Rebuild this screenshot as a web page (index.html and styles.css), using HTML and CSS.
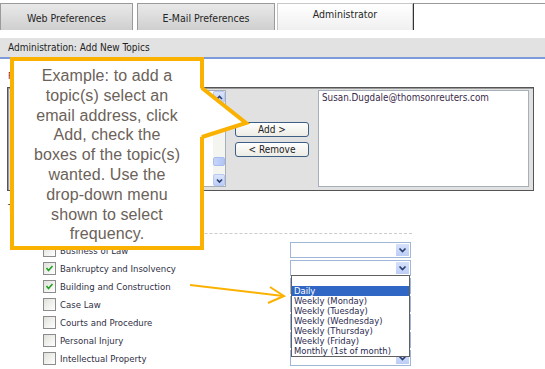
FILE: index.html
```html
<html>
<head>
<title>Administration: Add New Topics</title>
<link rel="stylesheet" href="styles.css">
<meta http-equiv="Content-Type" content="text/html; charset=UTF-8">
</head>
<body>
<div class="page">

 <div class="tabs">
  <div class="tab">Web Preferences</div>
  <div class="tab tab-wide">E-Mail Preferences</div>
  <div class="tab tab-active">Administrator</div>
  <div class="tab-rest"></div>
 </div>

 <div class="section-bar">Administration: Add New Topics</div>

 <div class="panel">
  <div class="field-label red">From:</div>
  <div class="user-box">
   <div class="listbox listbox-left">
    <div class="scrollbar">
     <div class="scroll-btn"><svg width="9" height="9" viewBox="0 0 9 9"><polyline points="2,6 4.5,3.5 7,6" fill="none" stroke="#2a3e70" stroke-width="1.6"/></svg></div>
     <div class="scroll-track"><div class="scroll-thumb"></div></div>
     <div class="scroll-btn"><svg width="9" height="9" viewBox="0 0 9 9"><polyline points="2,3.5 4.5,6 7,3.5" fill="none" stroke="#2a3e70" stroke-width="1.6"/></svg></div>
    </div>
   </div>
   <div class="buttons">
    <div class="btn">Add &gt;</div>
    <div class="btn">&lt; Remove</div>
   </div>
   <div class="listbox listbox-right">
    <div class="list-item">Susan.Dugdale@thomsonreuters.com</div>
   </div>
  </div>

  <div class="field-label">Topics:</div>
  <div class="topics">
   <div class="topic-row"><span class="check"></span><span class="topic-name">Business of Law</span><div class="select"><span class="select-arrow"><svg width="9" height="7" viewBox="0 0 9 7"><polyline points="1.5,1.5 4.5,4.5 7.5,1.5" fill="none" stroke="#2a3e70" stroke-width="1.7"/></svg></span></div></div>
   <div class="topic-row"><span class="check checked"><svg width="11" height="11" viewBox="0 0 11 11"><polyline points="2.5,5 4.5,7.5 8.5,3" fill="none" stroke="#22a022" stroke-width="1.6"/></svg></span><span class="topic-name">Bankruptcy and Insolvency</span><div class="select"><span class="select-arrow"><svg width="9" height="7" viewBox="0 0 9 7"><polyline points="1.5,1.5 4.5,4.5 7.5,1.5" fill="none" stroke="#2a3e70" stroke-width="1.7"/></svg></span></div></div>
   <div class="topic-row"><span class="check checked"><svg width="11" height="11" viewBox="0 0 11 11"><polyline points="2.5,5 4.5,7.5 8.5,3" fill="none" stroke="#22a022" stroke-width="1.6"/></svg></span><span class="topic-name">Building and Construction</span><div class="select"><span class="select-arrow"><svg width="9" height="7" viewBox="0 0 9 7"><polyline points="1.5,1.5 4.5,4.5 7.5,1.5" fill="none" stroke="#2a3e70" stroke-width="1.7"/></svg></span></div></div>
   <div class="topic-row"><span class="check"></span><span class="topic-name">Case Law</span><div class="select"><span class="select-arrow"><svg width="9" height="7" viewBox="0 0 9 7"><polyline points="1.5,1.5 4.5,4.5 7.5,1.5" fill="none" stroke="#2a3e70" stroke-width="1.7"/></svg></span></div></div>
   <div class="topic-row"><span class="check"></span><span class="topic-name">Courts and Procedure</span><div class="select"><span class="select-arrow"><svg width="9" height="7" viewBox="0 0 9 7"><polyline points="1.5,1.5 4.5,4.5 7.5,1.5" fill="none" stroke="#2a3e70" stroke-width="1.7"/></svg></span></div></div>
   <div class="topic-row"><span class="check"></span><span class="topic-name">Personal Injury</span><div class="select"><span class="select-arrow"><svg width="9" height="7" viewBox="0 0 9 7"><polyline points="1.5,1.5 4.5,4.5 7.5,1.5" fill="none" stroke="#2a3e70" stroke-width="1.7"/></svg></span></div></div>
   <div class="topic-row"><span class="check"></span><span class="topic-name">Intellectual Property</span><div class="select"><span class="select-arrow"><svg width="9" height="7" viewBox="0 0 9 7"><polyline points="1.5,1.5 4.5,4.5 7.5,1.5" fill="none" stroke="#2a3e70" stroke-width="1.7"/></svg></span></div></div>
  </div>
 </div>

 <!-- open frequency menu -->
 <div class="dropdown">
  <div class="option">&nbsp;</div>
  <div class="option option-selected">Daily</div>
  <div class="option">Weekly (Monday)</div>
  <div class="option">Weekly (Tuesday)</div>
  <div class="option">Weekly (Wednesday)</div>
  <div class="option">Weekly (Thursday)</div>
  <div class="option">Weekly (Friday)</div>
  <div class="option">Monthly (1st of month)</div>
 </div>

 <!-- annotation -->
 <div class="callout">Example: to add a<br>topic(s) select an<br>email address, click<br>Add, check the<br>boxes of the topic(s)<br>wanted. Use the<br>drop-down menu<br>shown to select<br>frequency.</div>
 <svg class="callout-tail" width="52" height="60" viewBox="0 0 52 60">
  <polygon points="0,6 47,41 0,55" fill="#ffffff"/>
  <polyline points="2,6 46,41 2,55" fill="none" stroke="#fbb100" stroke-width="4"/>
 </svg>
 <svg class="pointer-arrow" width="105" height="30" viewBox="0 0 105 30">
  <line x1="5" y1="5" x2="98" y2="16" stroke="#fbb100" stroke-width="2"/>
  <polyline points="85,7 99,16 83,23" fill="none" stroke="#fbb100" stroke-width="2"/>
 </svg>

</div>
</body>
</html>
```
FILE: styles.css
```css
body {
 margin: 0;
 background-color: #FFFFFF;
 font-family: "DejaVu Sans Condensed", "Liberation Sans", sans-serif;
 font-size: 9.5px;
 color: #2e2e3a;
}
.page {
 position: relative;
 width: 545px;
 height: 369px;
 overflow: hidden;
}
.tabs {
 display: flex;
 height: 27px;
 margin-top: 3px;
}
.tab {
 width: 133px;
 box-sizing: border-box;
 border: 1px solid #9a9a9a;
 border-bottom: none;
 background: linear-gradient(#e9e9e9, #cfcfcf);
 text-align: center;
 font-size: 10.5px;
 line-height: 28px;
 color: #262626;
}
.tab-wide {
 width: 138px;
 margin-left: 4px;
}
.tab-active {
 width: 136px;
 margin-left: 2px;
 border-color: #c8c8c8;
 background: linear-gradient(#ffffff, #f0f0f0);
 line-height: 20px;
}
.tab-rest {
 flex: 1;
 border-top: 1px solid #9a9a9a;
 border-left: 1px solid #333333;
}
.section-bar {
 margin-top: 8px;
 height: 19px;
 line-height: 20px;
 padding-left: 8px;
 background-color: #e2e2e2;
 border-bottom: 2px solid #7c9bd8;
 color: #222222;
 font-size: 10px;
}
.panel {
 padding-left: 7px;
}
.field-label {
 height: 16px;
 margin-top: 9px;
 padding-left: 1px;
 line-height: 16px;
}
.red {
 color: #8b2020;
}
.user-box {
 display: flex;
 width: 527px;
 height: 104px;
 box-sizing: border-box;
 margin-top: 3px;
 padding: 2px 3px;
 border: 1px solid #555555;
 box-shadow: inset 1px 1px 0 #9a9a9a;
 background-color: #e1e1e1;
}
.listbox {
 height: 97px;
 box-sizing: border-box;
 border: 1px solid #a6aeb9;
 background-color: #ffffff;
}
.listbox-left {
 width: 215px;
 display: flex;
 justify-content: flex-end;
}
.listbox-right {
 width: 211px;
 margin-left: 9px;
}
.list-item {
 padding: 1px 3px;
 font-size: 9.8px;
 color: #3a2a4a;
}
.scrollbar {
 width: 12px;
 display: flex;
 flex-direction: column;
 background-color: #f4f4f0;
}
.scroll-btn {
 height: 12px;
 box-sizing: border-box;
 border: 1px solid #b8c8f0;
 border-radius: 2px;
 background: linear-gradient(#dbe5fb, #bccdf6);
 display: flex;
 align-items: center;
 justify-content: center;
}
.scroll-track {
 flex: 1;
 display: flex;
 flex-direction: column;
 justify-content: flex-end;
 padding-bottom: 8px;
}
.scroll-thumb {
 height: 7px;
 border-radius: 2px;
 background: linear-gradient(90deg, #c6d5f8, #b2c6f4);
 border: 1px solid #a8bdf0;
}
.buttons {
 width: 74px;
 margin-left: 9px;
 display: flex;
 flex-direction: column;
 justify-content: center;
 gap: 5px;
}
.btn {
 height: 15px;
 box-sizing: border-box;
 border: 1px solid #3d5f86;
 border-radius: 3px;
 background: linear-gradient(#ffffff, #ecebe4);
 text-align: center;
 line-height: 13px;
 font-size: 10px;
 color: #222222;
}
.topics {
 width: 372px;
 margin-left: 33px;
 margin-top: 17px;
 padding-top: 7px;
 border-top: 1px dashed #cccccc;
}
.topic-row {
 display: flex;
 align-items: center;
 height: 18px;
}
.check {
 width: 13px;
 height: 13px;
 box-sizing: border-box;
 margin-left: 3px;
 border: 1px solid #8c8c8c;
 background: linear-gradient(135deg, #e0e0da, #ffffff);
 display: flex;
 align-items: center;
 justify-content: center;
}
.topic-name {
 width: 230px;
 margin-left: 4px;
 color: #2f2f45;
}
.select {
 width: 121px;
 height: 16px;
 box-sizing: border-box;
 border: 1px solid #9fb6d9;
 background-color: #ffffff;
 display: flex;
 justify-content: flex-end;
 padding: 1px;
}
.select-arrow {
 width: 13px;
 background: linear-gradient(#d6e1fb, #bccdf6);
 display: flex;
 align-items: center;
 justify-content: center;
}
.dropdown {
 position: absolute;
 left: 291px;
 top: 275px;
 width: 119px;
 box-sizing: border-box;
 border: 1px solid #606060;
 background-color: #ffffff;
}
.option {
 height: 10px;
 line-height: 10px;
 padding-left: 2px;
 font-size: 9.4px;
 color: #2a2a50;
 white-space: nowrap;
}
.option-selected {
 background-color: #3167c4;
 color: #ffffff;
}
.callout {
 position: absolute;
 left: 10px;
 top: 57px;
 width: 194px;
 height: 193px;
 box-sizing: border-box;
 padding: 5px 0 0 0;
 border: 4px solid #fbb100;
 background-color: #ffffff;
 font-family: "Liberation Sans", Arial, sans-serif;
 font-size: 16px;
 line-height: 19.8px;
 letter-spacing: 0.1px;
 text-align: center;
 white-space: nowrap;
 color: #6b6259;
}
.callout-tail {
 position: absolute;
 left: 200px;
 top: 82px;
}
.pointer-arrow {
 position: absolute;
 left: 185px;
 top: 280px;
}
```
